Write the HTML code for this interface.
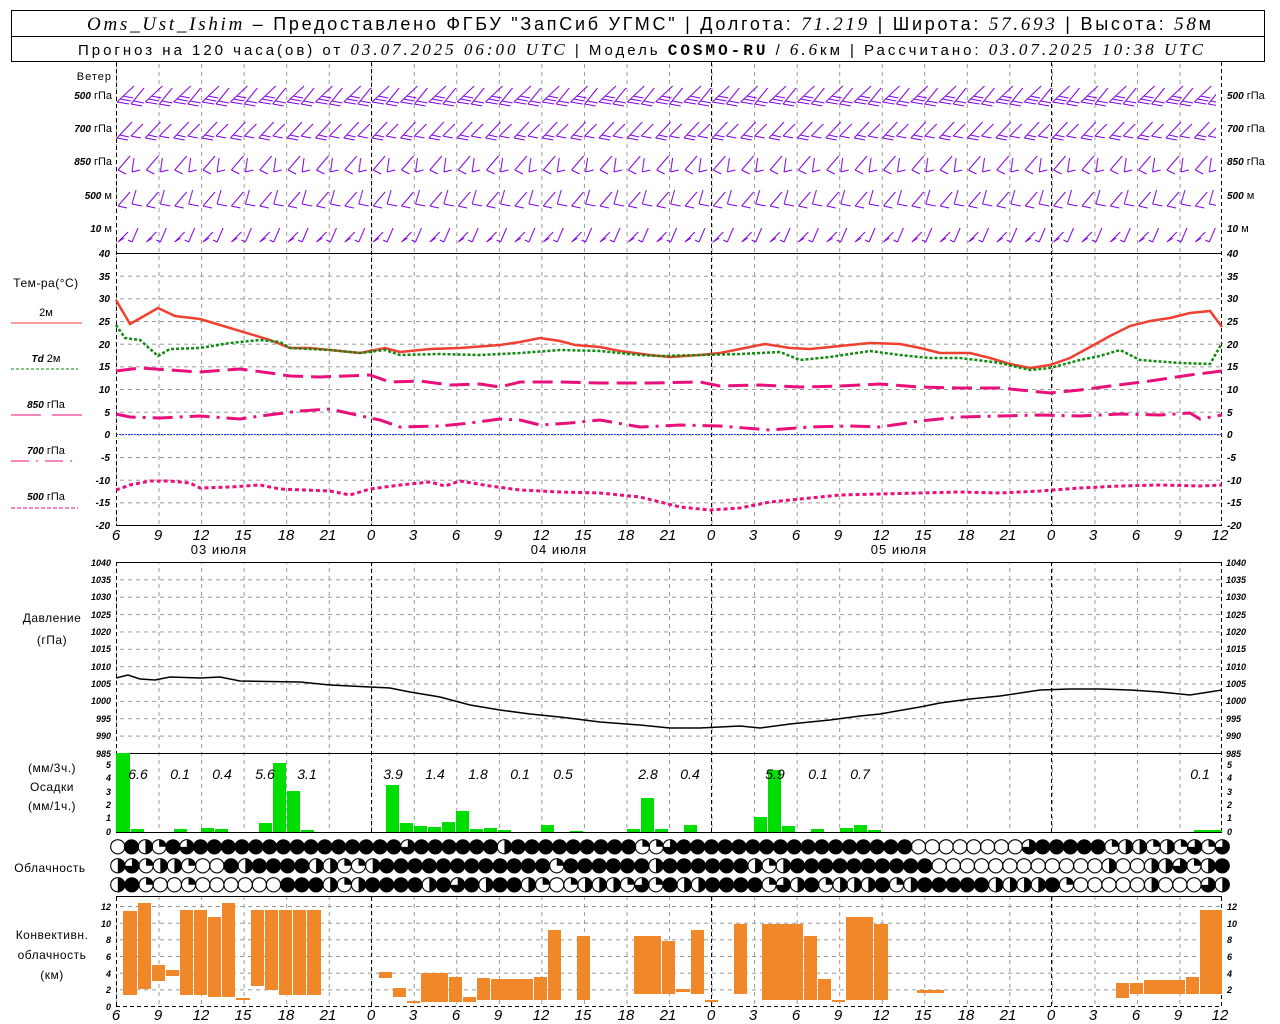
<!DOCTYPE html>
<html><head><meta charset="utf-8"><style>
body{margin:0;background:#fff;width:1280px;height:1024px;overflow:hidden}
svg{display:block}
.s{font-family:"Liberation Sans","DejaVu Sans",sans-serif}
.i{font-family:"Liberation Serif",serif;font-style:italic}
.ax{font-family:"Liberation Sans",sans-serif;font-style:italic;font-size:10px;font-weight:bold}
.tx{font-family:"Liberation Sans",sans-serif;font-style:italic;font-size:15px}
.sm{font-size:9px}
</style></head><body>
<svg width="1280" height="1024" viewBox="0 0 1280 1024" xmlns="http://www.w3.org/2000/svg">
<defs>
<pattern id="gv" x="116" y="0" width="42.54" height="8" patternUnits="userSpaceOnUse"><line x1="0.5" y1="0" x2="0.5" y2="4" stroke="#999" stroke-width="1"/></pattern>
<pattern id="gt" x="0" y="253" width="8" height="22.67" patternUnits="userSpaceOnUse"><line x1="0" y1="0.5" x2="4" y2="0.5" stroke="#999"/></pattern>
<pattern id="gp" x="0" y="562" width="8" height="17.36" patternUnits="userSpaceOnUse"><line x1="0" y1="0.5" x2="4" y2="0.5" stroke="#999"/></pattern>
<pattern id="gc" x="0" y="906" width="8" height="16.67" patternUnits="userSpaceOnUse"><line x1="0" y1="0.5" x2="4" y2="0.5" stroke="#999"/></pattern>
<pattern id="w1" x="116" y="82" width="28.35" height="34" patternUnits="userSpaceOnUse"><g stroke="#8000e0" fill="none" stroke-width="1"><path d="M1 20 L18 4 M1 20 L13 22 M4 17 L15 19 M7 14 L17 16"/><path d="M15 22 L28 6 M15 22 L26 24 M18 19 L28 21"/></g></pattern>
<pattern id="w2" x="116" y="116" width="28.35" height="34" patternUnits="userSpaceOnUse"><g stroke="#8000e0" fill="none"><path d="M1 22 L16 6 M1 22 L12 24 M4 19 L13 21"/><path d="M15 20 L27 8 M15 20 L25 22"/></g></pattern>
<pattern id="w3" x="116" y="150" width="28.35" height="34" patternUnits="userSpaceOnUse"><g stroke="#8000e0" fill="none"><path d="M2 20 L14 6 M2 20 L10 24"/><path d="M16 22 L18 8 M16 22 L24 20"/></g></pattern>
<pattern id="w4" x="116" y="184" width="28.35" height="34" patternUnits="userSpaceOnUse"><g stroke="#8000e0" fill="none"><path d="M2 22 L14 8 M2 22 L11 24"/><path d="M16 20 L20 6 M16 20 L26 22"/></g></pattern>
<pattern id="w5" x="116" y="218" width="28.35" height="34" patternUnits="userSpaceOnUse"><g stroke="#8000e0" fill="none"><path d="M2 24 L12 14 M2 24 L8 20"/><path d="M16 24 L22 10 M16 24 L12 22"/></g></pattern>
</defs>

<!-- header -->
<rect x="11.5" y="10.5" width="1253" height="51" fill="none" stroke="#000"/>
<line x1="11" y1="36.5" x2="1265" y2="36.5" stroke="#000"/>
<text x="87" y="30" font-size="18" textLength="1124" lengthAdjust="spacing"><tspan class="i" font-size="19">Oms_Ust_Ishim</tspan><tspan class="s"> – Предоставлено ФГБУ "ЗапСиб УГМС" | Долгота: </tspan><tspan class="i" font-size="19">71.219</tspan><tspan class="s"> | Широта: </tspan><tspan class="i" font-size="19">57.693</tspan><tspan class="s"> | Высота: </tspan><tspan class="i" font-size="19">58</tspan><tspan class="s">м</tspan></text>
<text x="78" y="55" font-size="15" textLength="1125" lengthAdjust="spacing"><tspan class="s">Прогноз на 120 часа(ов) от </tspan><tspan class="i" font-size="17">03.07.2025 06:00 UTC</tspan><tspan class="s">  | Модель </tspan><tspan font-family="Liberation Mono" font-weight="bold" font-size="16">COSMO-RU</tspan><tspan class="s"> / </tspan><tspan class="i" font-size="17">6.6</tspan><tspan class="s">км | Рассчитано: </tspan><tspan class="i" font-size="17">03.07.2025 10:38 UTC</tspan></text>

<!-- grids -->
<rect x="116" y="62" width="1106" height="463" fill="url(#gv)"/>
<rect x="116" y="562" width="1106" height="270" fill="url(#gv)"/>
<rect x="116" y="897" width="1106" height="110" fill="url(#gv)"/>
<rect x="116" y="254" width="1106" height="271" fill="url(#gt)"/>
<rect x="116" y="563" width="1106" height="190" fill="url(#gp)"/>
<rect x="116" y="906" width="1106" height="100" fill="url(#gc)"/>
<g stroke="#000" stroke-dasharray="4 3">
<path d="M116.5 62V525M116.5 562V832M116.5 897V1007M371.5 62V525M371.5 562V832M371.5 897V1007M711.5 62V525M711.5 562V832M711.5 897V1007M1051.5 62V525M1051.5 562V832M1051.5 897V1007M1221.5 62V525M1221.5 562V832M1221.5 897V1007"/>
<line x1="116" y1="1006.5" x2="1222" y2="1006.5"/>
</g>
<g stroke="#000"><line x1="116" y1="253.5" x2="1222" y2="253.5"/><line x1="116" y1="525.5" x2="1222" y2="525.5"/><line x1="116" y1="562.5" x2="1222" y2="562.5"/><line x1="116" y1="753.5" x2="1222" y2="753.5"/><line x1="116" y1="832.5" x2="1222" y2="832.5"/><line x1="116" y1="896.5" x2="1222" y2="896.5"/></g>
<line x1="116" y1="434.5" x2="1222" y2="434.5" stroke="#2040ff" stroke-dasharray="2 1"/>

<!-- wind -->
<rect x="116" y="84" width="1100" height="30" fill="url(#w1)"/>
<rect x="116" y="116" width="1100" height="32" fill="url(#w2)"/>
<rect x="116" y="150" width="1100" height="32" fill="url(#w3)"/>
<rect x="116" y="184" width="1100" height="32" fill="url(#w4)"/>
<rect x="116" y="220" width="1100" height="28" fill="url(#w5)"/>
<g class="s" font-size="11" text-anchor="end">
<text x="112" y="80" letter-spacing="1">Ветер</text>
<text x="112" y="99"><tspan class="ax">500</tspan> гПа</text>
<text x="112" y="132"><tspan class="ax">700</tspan> гПа</text>
<text x="112" y="165"><tspan class="ax">850</tspan> гПа</text>
<text x="112" y="199"><tspan class="ax">500</tspan>  м</text>
<text x="112" y="232"><tspan class="ax">10</tspan>    м</text>
</g>
<g class="s" font-size="11">
<text x="1227" y="99"><tspan class="ax">500</tspan> гПа</text>
<text x="1227" y="132"><tspan class="ax">700</tspan> гПа</text>
<text x="1227" y="165"><tspan class="ax">850</tspan> гПа</text>
<text x="1227" y="199"><tspan class="ax">500</tspan>  м</text>
<text x="1227" y="232"><tspan class="ax">10</tspan>    м</text>
</g>

<!-- temperature -->
<g fill="none" stroke-width="2.5">
<polyline stroke="#f04030" points="116,300 130,324 158,308 175,316 200,319 230,328 270,340 290,348 310,348 340,351 360,353 385,348 400,352 430,349 460,348 500,345 520,342 540,338 560,341 575,345 600,347 620,351 650,355 670,357 700,355 720,353 745,348 765,344 790,348 810,349 840,346 870,343 900,344 920,348 940,353 970,353 990,358 1010,364 1030,368 1050,365 1070,358 1090,347 1110,336 1130,326 1150,321 1170,318 1190,313 1210,311 1222,327"/>
<polyline stroke="#108a10" stroke-dasharray="3 2" points="116,325 125,338 140,340 158,356 170,349 200,348 230,343 260,340 280,342 290,348 330,350 360,353 385,350 400,355 440,354 480,355 520,353 560,350 600,351 640,355 660,356 700,355 740,354 780,352 800,360 830,357 870,351 900,355 930,358 960,358 1000,363 1030,370 1050,368 1080,360 1100,356 1120,350 1140,360 1180,363 1210,364 1222,343"/>
<polyline stroke="#e8107a" stroke-width="3" stroke-dasharray="20 8" points="116,371 140,368 170,370 200,372 240,369 270,373 290,376 320,377 370,375 390,382 420,381 450,385 480,384 500,387 520,382 560,382 600,383 650,383 700,382 720,386 760,385 800,387 840,386 880,384 920,387 960,388 1000,388 1030,391 1050,393 1080,390 1110,386 1150,381 1190,375 1222,371"/>
<polyline stroke="#e8107a" stroke-width="3" stroke-dasharray="20 7 3 7" points="116,414 130,417 160,418 200,416 240,419 260,416 300,411 330,409 370,418 380,420 400,427 440,426 470,423 500,419 520,420 540,425 570,423 600,420 640,427 680,425 720,426 770,430 810,427 850,426 880,427 920,421 960,417 1000,416 1040,415 1080,416 1120,414 1160,415 1190,413 1200,419 1222,415"/>
<polyline stroke="#e8107a" stroke-width="3" stroke-dasharray="4 3" points="116,490 130,485 150,481 170,481 190,483 200,488 230,487 260,485 280,489 330,491 350,495 370,489 400,485 430,482 445,486 460,481 490,486 520,490 560,492 600,493 640,497 680,507 710,510 740,508 770,502 800,499 840,495 880,494 920,493 960,492 1000,493 1040,491 1080,488 1120,486 1160,485 1200,486 1222,485"/>
</g>
<g class="ax" text-anchor="end">
<text x="110" y="257">40</text><text x="110" y="280">35</text><text x="110" y="302">30</text><text x="110" y="325">25</text><text x="110" y="348">20</text><text x="110" y="370">15</text><text x="110" y="393">10</text><text x="110" y="416">5</text><text x="110" y="438">0</text><text x="110" y="461">-5</text><text x="110" y="484">-10</text><text x="110" y="506">-15</text><text x="110" y="529">-20</text>
</g>
<g class="ax">
<text x="1227" y="257">40</text><text x="1227" y="280">35</text><text x="1227" y="302">30</text><text x="1227" y="325">25</text><text x="1227" y="348">20</text><text x="1227" y="370">15</text><text x="1227" y="393">10</text><text x="1227" y="416">5</text><text x="1227" y="438">0</text><text x="1227" y="461">-5</text><text x="1227" y="484">-10</text><text x="1227" y="506">-15</text><text x="1227" y="529">-20</text>
</g>
<g class="s" font-size="12" text-anchor="middle">
<text x="46" y="287" letter-spacing="0.5">Тем-ра(°C)</text>
<text x="46" y="316" font-size="11">2м</text>
<text x="46" y="362" font-size="11"><tspan class="ax">Td</tspan>   2м</text>
<text x="46" y="408" font-size="11"><tspan class="ax">850</tspan>  гПа</text>
<text x="46" y="454" font-size="11"><tspan class="ax">700</tspan>  гПа</text>
<text x="46" y="500" font-size="11"><tspan class="ax">500</tspan>  гПа</text>
</g>
<line x1="11" y1="323" x2="82" y2="323" stroke="#f04030"/>
<line x1="11" y1="369" x2="78" y2="369" stroke="#108a10" stroke-dasharray="3 2"/>
<line x1="11" y1="415" x2="82" y2="415" stroke="#e8107a" stroke-dasharray="30 11"/>
<line x1="11" y1="461" x2="78" y2="461" stroke="#e8107a" stroke-dasharray="18 7 2 7"/>
<line x1="11" y1="508" x2="78" y2="508" stroke="#e8107a" stroke-dasharray="4 2"/>

<!-- time axis labels -->
<g class="tx" text-anchor="middle">
<text x="116" y="540">6</text><text x="158" y="540">9</text><text x="201" y="540">12</text><text x="243" y="540">15</text><text x="286" y="540">18</text><text x="328" y="540">21</text><text x="371" y="540">0</text><text x="413" y="540">3</text><text x="456" y="540">6</text><text x="498" y="540">9</text><text x="541" y="540">12</text><text x="583" y="540">15</text><text x="626" y="540">18</text><text x="668" y="540">21</text><text x="711" y="540">0</text><text x="753" y="540">3</text><text x="796" y="540">6</text><text x="838" y="540">9</text><text x="881" y="540">12</text><text x="923" y="540">15</text><text x="966" y="540">18</text><text x="1008" y="540">21</text><text x="1051" y="540">0</text><text x="1093" y="540">3</text><text x="1136" y="540">6</text><text x="1178" y="540">9</text><text x="1220" y="540">12</text>
</g>
<g class="s" font-size="13" text-anchor="middle" letter-spacing="1">
<text x="219" y="554">03 июля</text><text x="559" y="554">04 июля</text><text x="899" y="554">05 июля</text>
</g>
<g class="tx" text-anchor="middle">
<text x="116" y="1020">6</text><text x="158" y="1020">9</text><text x="201" y="1020">12</text><text x="243" y="1020">15</text><text x="286" y="1020">18</text><text x="328" y="1020">21</text><text x="371" y="1020">0</text><text x="413" y="1020">3</text><text x="456" y="1020">6</text><text x="498" y="1020">9</text><text x="541" y="1020">12</text><text x="583" y="1020">15</text><text x="626" y="1020">18</text><text x="668" y="1020">21</text><text x="711" y="1020">0</text><text x="753" y="1020">3</text><text x="796" y="1020">6</text><text x="838" y="1020">9</text><text x="881" y="1020">12</text><text x="923" y="1020">15</text><text x="966" y="1020">18</text><text x="1008" y="1020">21</text><text x="1051" y="1020">0</text><text x="1093" y="1020">3</text><text x="1136" y="1020">6</text><text x="1178" y="1020">9</text><text x="1220" y="1020">12</text>
</g>

<!-- pressure -->
<polyline fill="none" stroke="#000" stroke-width="1.5" points="116,678 128,675 140,679 155,680 170,677 200,678 220,677 240,681 300,682 330,685 370,687 390,688 410,692 440,697 470,705 500,710 530,714 560,717 600,722 640,725 670,728 700,728 720,727 740,726 760,728 790,724 830,720 860,716 880,714 920,707 940,703 970,699 1000,696 1040,690 1070,689 1100,689 1130,690 1160,692 1190,695 1222,690"/>
<g class="ax sm" text-anchor="end">
<text x="111" y="566">1040</text><text x="111" y="583">1035</text><text x="111" y="600">1030</text><text x="111" y="618">1025</text><text x="111" y="635">1020</text><text x="111" y="652">1015</text><text x="111" y="670">1010</text><text x="111" y="687">1005</text><text x="111" y="704">1000</text><text x="111" y="722">995</text><text x="111" y="739">990</text><text x="111" y="757">985</text>
</g>
<g class="ax sm">
<text x="1226" y="566">1040</text><text x="1226" y="583">1035</text><text x="1226" y="600">1030</text><text x="1226" y="618">1025</text><text x="1226" y="635">1020</text><text x="1226" y="652">1015</text><text x="1226" y="670">1010</text><text x="1226" y="687">1005</text><text x="1226" y="704">1000</text><text x="1226" y="722">995</text><text x="1226" y="739">990</text><text x="1226" y="757">985</text>
</g>
<g class="s" font-size="12" text-anchor="middle" letter-spacing="0.5"><text x="52" y="622">Давление</text><text x="52" y="644">(гПа)</text></g>

<!-- precip -->
<g fill="#00dd00">
<rect x="116" y="753" width="14" height="79"/><rect x="131" y="829" width="13" height="3"/><rect x="174" y="829" width="13" height="3"/><rect x="201" y="828" width="13" height="4"/><rect x="215" y="829" width="13" height="3"/><rect x="259" y="823" width="13" height="9"/><rect x="273" y="763" width="13" height="69"/><rect x="287" y="791" width="13" height="41"/><rect x="301" y="830" width="13" height="2"/><rect x="386" y="785" width="13" height="47"/><rect x="400" y="823" width="13" height="9"/><rect x="414" y="826" width="13" height="6"/><rect x="428" y="827" width="13" height="5"/><rect x="442" y="822" width="13" height="10"/><rect x="456" y="811" width="13" height="21"/><rect x="470" y="829" width="13" height="3"/><rect x="484" y="828" width="13" height="4"/><rect x="498" y="830" width="13" height="2"/><rect x="541" y="825" width="13" height="7"/><rect x="570" y="831" width="13" height="1"/><rect x="627" y="829" width="13" height="3"/><rect x="641" y="798" width="13" height="34"/><rect x="655" y="829" width="13" height="3"/><rect x="684" y="825" width="13" height="7"/><rect x="754" y="817" width="13" height="15"/><rect x="768" y="770" width="13" height="62"/><rect x="782" y="826" width="13" height="6"/><rect x="811" y="829" width="13" height="3"/><rect x="840" y="828" width="13" height="4"/><rect x="854" y="825" width="13" height="7"/><rect x="868" y="830" width="13" height="2"/><rect x="1194" y="830" width="28" height="2"/>
</g>
<g class="tx" text-anchor="middle" style="font-size:14px">
<text x="138" y="779">6.6</text><text x="180" y="779">0.1</text><text x="222" y="779">0.4</text><text x="265" y="779">5.6</text><text x="307" y="779">3.1</text><text x="393" y="779">3.9</text><text x="435" y="779">1.4</text><text x="478" y="779">1.8</text><text x="520" y="779">0.1</text><text x="563" y="779">0.5</text><text x="648" y="779">2.8</text><text x="690" y="779">0.4</text><text x="775" y="779">5.9</text><text x="818" y="779">0.1</text><text x="860" y="779">0.7</text><text x="1200" y="779">0.1</text>
</g>
<g class="ax sm" text-anchor="end"><text x="111" y="768">5</text><text x="111" y="781">4</text><text x="111" y="795">3</text><text x="111" y="808">2</text><text x="111" y="821">1</text><text x="111" y="835">0</text></g>
<g class="ax sm"><text x="1227" y="768">5</text><text x="1227" y="781">4</text><text x="1227" y="795">3</text><text x="1227" y="808">2</text><text x="1227" y="821">1</text><text x="1227" y="835">0</text></g>
<g class="s" font-size="12" text-anchor="middle" letter-spacing="0.5"><text x="52" y="772">(мм/3ч.)</text><text x="52" y="791">Осадки</text><text x="52" y="810">(мм/1ч.)</text></g>

<!-- clouds -->
<g font-family="DejaVu Sans" font-size="20">
<text x="109" y="852" textLength="1122" lengthAdjust="spacing">○●◑◔●◕●●●●●●●●●●●●●●●◕●●●●●●◑●●●●●●●●●◔◔◕●●●●●●●●●●●●●●●●●○○○○○○○○◕●●●●●◔◑◑◔◑◔◕◔◕</text>
<text x="109" y="871" textLength="1122" lengthAdjust="spacing">◑◕◔◑◑◔○○●◑●●●●◑◑◔◔◑●●●●●●●●●●●●◔●●●●●●◑●●●●●●◑◔◑●●●●●●●●●●○○○○○○○○○○○○◑○○◑◑◕◔◑●</text>
<text x="109" y="890" textLength="1122" lengthAdjust="spacing">◑●◔○○◔○○○○○○●●●◑◔◑●●●●◑●◕●◑●●◑◔○◔◑◑◑◔◕◔●◑◑●●●●◔◕◑●◔◑◑◑●◔◑●●●●●◑◑◑◑●◔○○○○○◑○○○◕◑</text>
</g>
<text x="50" y="872" class="s" font-size="12" text-anchor="middle" letter-spacing="0.5">Облачность</text>

<!-- convective -->
<g fill="#f0882a">
<rect x="123" y="911" width="14" height="84"/><rect x="138" y="903" width="13" height="86"/><rect x="152" y="965" width="13" height="16"/><rect x="166" y="970" width="13" height="6"/><rect x="180" y="910" width="13" height="85"/><rect x="194" y="910" width="13" height="85"/><rect x="208" y="917" width="13" height="80"/><rect x="222" y="903" width="13" height="94"/><rect x="236" y="998" width="14" height="2"/><rect x="251" y="910" width="13" height="76"/><rect x="265" y="910" width="13" height="80"/><rect x="279" y="910" width="13" height="85"/><rect x="293" y="910" width="13" height="85"/><rect x="307" y="910" width="14" height="85"/>
<rect x="379" y="972" width="13" height="6"/><rect x="393" y="988" width="13" height="9"/><rect x="407" y="1001" width="13" height="2"/><rect x="421" y="973" width="27" height="29"/><rect x="449" y="977" width="13" height="25"/><rect x="463" y="997" width="13" height="5"/><rect x="477" y="978" width="13" height="22"/><rect x="491" y="979" width="42" height="21"/><rect x="534" y="977" width="13" height="23"/><rect x="548" y="930" width="13" height="70"/><rect x="577" y="936" width="13" height="64"/><rect x="634" y="936" width="27" height="58"/><rect x="662" y="941" width="13" height="53"/><rect x="676" y="989" width="14" height="3"/><rect x="691" y="930" width="13" height="64"/><rect x="705" y="1000" width="13" height="2"/><rect x="734" y="924" width="13" height="70"/><rect x="762" y="924" width="41" height="76"/><rect x="804" y="936" width="13" height="64"/><rect x="818" y="979" width="13" height="21"/><rect x="832" y="1000" width="13" height="2"/><rect x="846" y="917" width="27" height="83"/><rect x="874" y="924" width="14" height="76"/><rect x="917" y="990" width="27" height="3"/><rect x="1116" y="983" width="13" height="15"/><rect x="1130" y="983" width="13" height="11"/><rect x="1144" y="980" width="41" height="14"/><rect x="1186" y="977" width="13" height="17"/><rect x="1200" y="910" width="22" height="84"/>
</g>
<g class="ax sm" text-anchor="end"><text x="111" y="910">12</text><text x="111" y="927">10</text><text x="111" y="943">8</text><text x="111" y="960">6</text><text x="111" y="977">4</text><text x="111" y="993">2</text><text x="111" y="1010">0</text></g>
<g class="ax sm"><text x="1227" y="910">12</text><text x="1227" y="927">10</text><text x="1227" y="943">8</text><text x="1227" y="960">6</text><text x="1227" y="977">4</text><text x="1227" y="993">2</text></g>
<g class="s" font-size="12" text-anchor="middle" letter-spacing="0.5"><text x="52" y="939">Конвективн.</text><text x="52" y="959">облачность</text><text x="52" y="979">(км)</text></g>
</svg>
</body></html>
